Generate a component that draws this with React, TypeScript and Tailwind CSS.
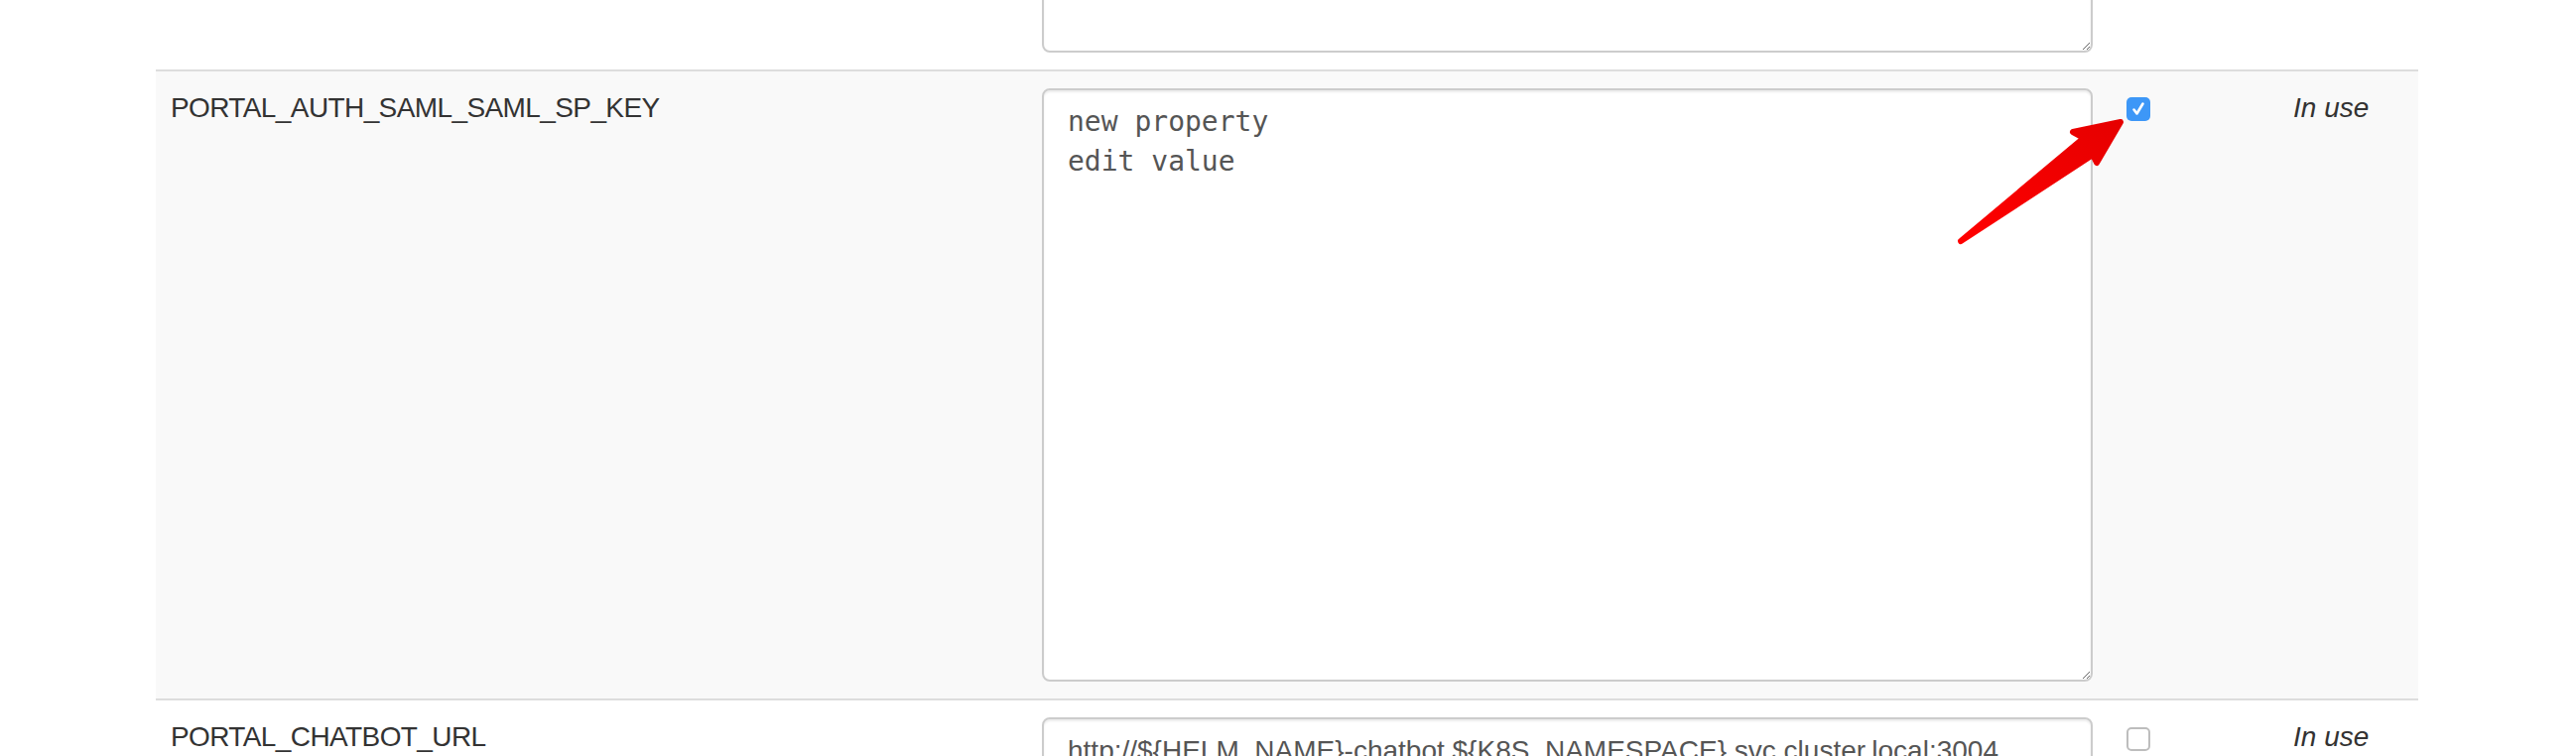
import React from 'react';

interface ConfigRow {
  name: string;
  value: string;
  kind: 'textarea' | 'input';
  height: number;
  checked: boolean;
  striped: boolean;
}

const rows: ConfigRow[] = [
  { name: '', value: '', kind: 'textarea', height: 100, checked: false, striped: false },
  {
    name: 'PORTAL_AUTH_SAML_SAML_SP_KEY',
    value: 'new property\nedit value',
    kind: 'textarea',
    height: 598,
    checked: true,
    striped: true,
  },
  {
    name: 'PORTAL_CHATBOT_URL',
    value: 'http://${HELM_NAME}-chatbot.${K8S_NAMESPACE}.svc.cluster.local:3004',
    kind: 'input',
    height: 68,
    checked: false,
    striped: false,
  },
];

const Checkbox: React.FC<{ checked: boolean }> = ({ checked }) =>
  checked ? (
    <span className="mt-[9px] flex h-6 w-6 items-center justify-center rounded-[5px] bg-[#3d97f7]">
      <svg width="24" height="24" viewBox="0 0 24 24" fill="none">
        <path d="M7.5 12.5 L10.5 16.5 L16.5 6.5" stroke="#fff" strokeWidth="2.6" strokeLinecap="round" strokeLinejoin="round" />
      </svg>
    </span>
  ) : (
    <span className="mt-[10px] block h-6 w-6 rounded-[5px] border-2 border-[#bdbdbd] bg-white"></span>
  );

// red annotation arrow pointing at the checkbox
const Arrow: React.FC = () => (
  <svg
    className="pointer-events-none absolute left-[1960px] top-[100px]"
    width="200"
    height="160"
    viewBox="0 0 200 160"
  >
    <defs>
      <linearGradient id="arrowRed" x1="0" y1="1" x2="1" y2="0">
        <stop offset="0" stopColor="#ff0000" />
        <stop offset="1" stopColor="#e60000" />
      </linearGradient>
    </defs>
    <path
      d="M16 143 L140 39 L129 33 L177 23 L153 64 L149 56 Z"
      fill="url(#arrowRed)"
      stroke="url(#arrowRed)"
      strokeWidth="6"
      strokeLinejoin="round"
    />
  </svg>
);

const App: React.FC = () => {
  return (
    <div className="relative h-[762px] w-full overflow-hidden bg-white font-['Liberation_Sans',Arial,sans-serif] text-[28px] leading-[40px] text-[#333]">
      <div className="-mt-[64px] ml-[157px] w-[2280px]">
        {rows.map((row, i) => (
          <div
            key={i}
            className={`grid grid-cols-[877px_1091px_170px_142px] ${i > 0 ? 'border-t-2 border-[#dddddd]' : ''} ${row.striped ? 'bg-[#f9f9f9]' : 'bg-white'}`}
          >
            <div className="pt-[17px] pb-[17px] pl-[15px] tracking-[-0.6px]">{row.name}</div>
            <div className="px-4 pt-[17px] pb-[17px]">
              {row.kind === 'textarea' ? (
                <textarea
                  readOnly
                  defaultValue={row.value}
                  style={{ height: row.height }}
                  className="block w-full rounded-[8px] border-2 border-[#cccccc] bg-white px-6 py-3 font-['DejaVu_Sans_Mono',monospace] text-[28px] leading-[40px] text-[#555] shadow-[inset_0_2px_2px_rgba(0,0,0,0.075)] outline-none"
                />
              ) : (
                <input
                  readOnly
                  type="text"
                  defaultValue={row.value}
                  style={{ height: row.height }}
                  className="block w-full rounded-[8px] border-2 border-[#cccccc] bg-white px-6 py-3 text-[28px] leading-[40px] text-[#555] shadow-[inset_0_2px_2px_rgba(0,0,0,0.075)] outline-none"
                />
              )}
            </div>
            <div className="pl-[18px] pt-[17px]">{row.name && <Checkbox checked={row.checked} />}</div>
            <div className="pl-4 pt-[17px] italic">{row.name && 'In use'}</div>
          </div>
        ))}
      </div>
      <Arrow />
    </div>
  );
};

export default App;
